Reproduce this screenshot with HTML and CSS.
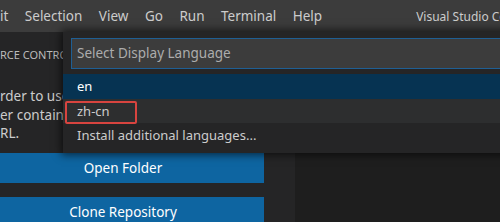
FILE: index.html
```html
<!DOCTYPE html>
<html>
<head>
<meta charset="utf-8">
<link rel="stylesheet" href="styles.css">
</head>
<body>
<div class="app">
  <header class="titlebar">
    <nav class="menu">
      <span class="menu-item">it</span>
      <span class="menu-item">Selection</span>
      <span class="menu-item">View</span>
      <span class="menu-item">Go</span>
      <span class="menu-item">Run</span>
      <span class="menu-item">Terminal</span>
      <span class="menu-item">Help</span>
    </nav>
    <div class="window-title">Visual Studio Code</div>
  </header>
  <main class="workbench">
    <aside class="sidebar">
      <div class="sidebar-header">RCE CONTROL</div>
      <div class="welcome">
        <span class="line">rder to use git features, you can open a</span>
        <span class="line">er containing a git repository or clone from a</span>
        <span class="line">RL.</span>
      </div>
      <div class="btn">Open Folder</div>
      <div class="btn">Clone Repository</div>
    </aside>
    <section class="editor"></section>
  </main>
  <div class="quickpick">
    <div class="qp-input">Select Display Language</div>
    <ul class="qp-list">
      <li class="qp-row selected">en</li>
      <li class="qp-row hover">zh-cn</li>
      <li class="qp-row">Install additional languages...</li>
    </ul>
    <div class="highlight-box"></div>
  </div>
</div>
</body>
</html>
```

FILE: styles.css
```css
* { box-sizing: border-box; }
html, body { margin: 0; padding: 0; }
body {
  width: 500px;
  height: 222px;
  overflow: hidden;
  background: #1e1e1e;
  font-family: "Noto Sans", "Open Sans", sans-serif;
  color: #cccccc;
}
.app {
  position: relative;
  width: 500px;
  height: 222px;
  overflow: hidden;
  display: flex;
  flex-direction: column;
}
.titlebar {
  height: 32px;
  flex-shrink: 0;
  background: #3c3c3c;
  display: flex;
  align-items: center;
  font-size: 13.5px;
  color: #cccccc;
  white-space: nowrap;
}
.menu {
  display: flex;
  gap: 16.5px;
  padding-left: 0;
}
.window-title {
  margin-left: 94px;
  font-size: 12px;
  color: #cccccc;
  flex-shrink: 0;
}
.workbench {
  flex: 1;
  display: flex;
  min-height: 0;
}
.sidebar {
  width: 295px;
  flex-shrink: 0;
  background: #252526;
  padding-right: 31px;
  white-space: nowrap;
  overflow: hidden;
}
.sidebar-header {
  height: 45px;
  line-height: 45px;
  font-size: 11px;
  color: #bbbbbb;
}
.welcome {
  margin-top: 10px;
  font-size: 13.5px;
  line-height: 18.5px;
  color: #cccccc;
}
.line { display: block; }
.btn {
  margin-left: -18px;
  height: 30px;
  line-height: 30px;
  text-align: center;
  background: #0e65a1;
  color: #ffffff;
  font-size: 13.5px;
}
.welcome + .btn { margin-top: 10px; }
.btn + .btn { margin-top: 14px; }
.editor {
  flex: 1;
  background: #1e1e1e;
}
.quickpick {
  position: absolute;
  top: 32px;
  left: 63px;
  width: 460px;
  height: 121px;
  background: #252526;
  box-shadow: 0 0 8px 2px rgba(0, 0, 0, 0.6);
  padding: 6px 0 0 8px;
  z-index: 5;
}
.qp-input {
  height: 31px;
  background: #3c3c3c;
  border: 1px solid #1f5f94;
  border-right: none;
  padding-left: 5px;
  line-height: 29px;
  font-size: 13.5px;
  color: #acacac;
}
.qp-list {
  list-style: none;
  margin: 5px 0 0 -8px;
  padding: 0;
}
.qp-row {
  height: 24px;
  line-height: 24px;
  padding-left: 14px;
  font-size: 13px;
  color: #cccccc;
}
.qp-row.selected { height: 25px; line-height: 25px; background: #063352; color: #ffffff; }
.qp-row.hover { background: #2d2e2f; }
.highlight-box {
  position: absolute;
  left: 2px;
  top: 69px;
  width: 72px;
  height: 23px;
  border: 2px solid #d8443f;
  border-radius: 2px;
}
```
